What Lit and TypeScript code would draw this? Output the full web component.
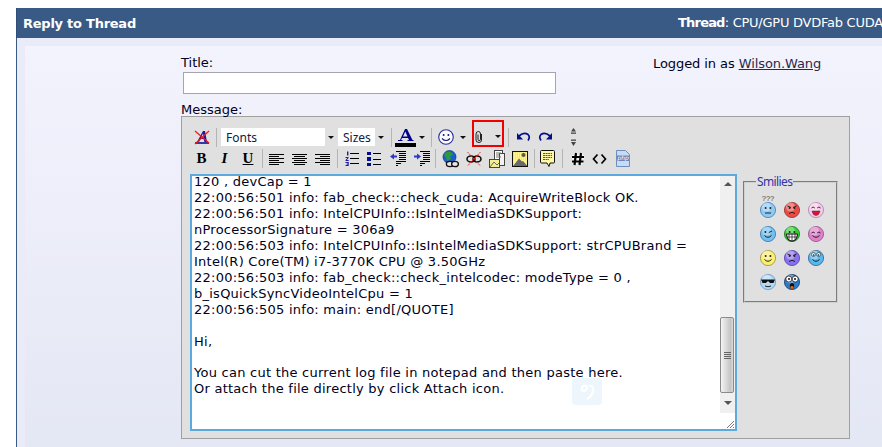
import { LitElement, html, css, svg } from "lit";
import { customElement } from "lit/decorators.js";

const ic = (w: number, h: number, body: unknown) =>
  html`<svg class="ic" width=${w} height=${h} viewBox="0 0 ${w} ${h}">${body}</svg>`;

const arrow = html`<i class="arrow"></i>`;

const lines = (coords: number[][], color = "#000") =>
  coords.map(([x1, y, x2]) => svg`<rect x=${x1} y=${y} width=${x2 - x1} height="1" fill=${color}/>`);

const icons = {
  remove: ic(16, 16, svg`
    <path d="M1 14h14" stroke="#00008b" stroke-width="1.5"/>
    <path d="M3 13 L9 2 h2 L13 13 h-2.5 L9.5 10 H6.5 L5 13z" fill="#1a1aa8"/>
    <path d="M7.2 8.5 L9 4.5 L9.8 8.5z" fill="#e0e0e0"/>
    <path d="M1 2 L15 14 M15 2 L1 15" stroke="#f01818" stroke-width="1.2"/>`),
  color: ic(21, 20, svg`
    <path d="M3 14 h4.5 v-1 h-1.5 l1-2 h6 l1 2 h-1.5 v1 h6 v-1 h-1 L12 2 H10 L5 13 H3z M8 9.5 L10.3 4.5 L12.5 9.5z" fill="#00008b" fill-rule="evenodd"/>
    <rect x="0" y="16" width="21" height="4" fill="#000"/>`),
  smile: ic(16, 16, svg`
    <circle cx="8" cy="8" r="7.3" fill="#fafaff" stroke="#2a2aa0" stroke-width="1.1"/>
    <circle cx="5.6" cy="6" r="1" fill="#1a1a70"/><circle cx="10.4" cy="6" r="1" fill="#1a1a70"/>
    <path d="M4 9.5 Q8 13.5 12 9.5" fill="none" stroke="#1a1a70" stroke-width="1.1"/>`),
  clip: ic(8, 12, svg`
    <path d="M6.5 3 V9 Q6.5 11.5 4 11.5 Q1 11.5 1 9 V3 Q1 .5 3.5 .5 Q5.5 .5 5.5 3 V8.5 Q5.5 9.5 4 9.5 Q3 9.5 3 8.5 V3.5" fill="none" stroke="#222" stroke-width="1"/>`),
  undo: ic(15, 12, svg`
    <path d="M3 5 Q8 0.5 12 3.5 Q14.5 6 12 9.5" fill="none" stroke="#00108c" stroke-width="1.7"/>
    <path d="M1 2 L1 8.5 L7 8.5z" fill="#00108c"/>`),
  redo: ic(15, 12, svg`
    <path d="M12 5 Q7 0.5 3 3.5 Q0.5 6 3 9.5" fill="none" stroke="#00108c" stroke-width="1.7"/>
    <path d="M14 2 L14 8.5 L8 8.5z" fill="#00108c"/>`),
  resize: ic(7, 20, svg`
    <path d="M3.5 1 L6 4.5 H1z" fill="#444"/><rect x="1" y="5.5" width="5" height="1.3" fill="#444"/>
    <rect x="1" y="12.5" width="5" height="1.3" fill="#444"/><path d="M3.5 19 L6 15 H1z" fill="#444"/>`),
  left: ic(15, 12, lines([[0, 1, 15], [0, 3, 10], [0, 5, 15], [0, 7, 10], [0, 9, 15], [0, 11, 10]])),
  center: ic(15, 12, lines([[0, 1, 15], [2, 3, 13], [0, 5, 15], [2, 7, 13], [0, 9, 15], [2, 11, 13]])),
  right: ic(15, 12, lines([[0, 1, 15], [5, 3, 15], [0, 5, 15], [5, 7, 15], [0, 9, 15], [5, 11, 15]])),
  ol: ic(14, 15, svg`
    <path d="M2 0.5h1.4v4H2z M0.5 6h3v1l-1.6 2h1.8v1H0.5v-.8l1.8-2.2H.5z M.5 11h3.2v4H.5v-1h2v-.5h-1v-.8h1V12H.5z" fill="#1a1ab0"/>
    ${lines([[5, 2, 14], [5, 7, 14], [5, 12, 14]])}`),
  ul: ic(14, 14, svg`
    <rect x="0" y="0" width="4" height="3" fill="#00108c"/><rect x="0" y="5" width="4" height="4" fill="#00108c"/><rect x="0" y="11" width="4" height="3" fill="#00108c"/>
    ${lines([[6, 1, 14], [6, 7, 14], [6, 12, 14]])}`),
  outdent: ic(16, 15, svg`
    <path d="M0 5.5 L4 2.5 V4.5 H7 V6.5 H4 V8.5z" fill="#2a3ac8"/>
    ${lines([[6, 0, 16], [9, 2, 16], [9, 4, 16], [9, 6, 16], [9, 8, 16], [6, 10, 16], [6, 12, 11], [6, 14, 8]])}`),
  indent: ic(16, 15, svg`
    <path d="M7 5.5 L3 2.5 V4.5 H0 V6.5 H3 V8.5z" fill="#2a3ac8"/>
    ${lines([[6, 0, 16], [9, 2, 16], [9, 4, 16], [9, 6, 16], [9, 8, 16], [6, 10, 16], [6, 12, 11], [6, 14, 8]])}`),
  globe: ic(17, 18, svg`
    <circle cx="7.5" cy="7" r="6.5" fill="#1a5fd0" stroke="#102a80" stroke-width=".7"/>
    <path d="M3 3 Q6 0.5 9 2 L11 5 L8 6 L9 9 L5 11 L4 7 L2 6z" fill="#2c9a3c"/>
    <ellipse cx="8" cy="14" rx="3.6" ry="2.6" fill="#e6e6e6" stroke="#111" stroke-width="1.3"/>
    <ellipse cx="13" cy="14" rx="3.4" ry="2.6" fill="#e6e6e6" stroke="#111" stroke-width="1.3"/>`),
  unlink: ic(16, 16, svg`
    <ellipse cx="5" cy="8" rx="4" ry="3" fill="none" stroke="#111" stroke-width="1.6"/>
    <ellipse cx="11" cy="8" rx="4" ry="3" fill="none" stroke="#111" stroke-width="1.6"/>
    <path d="M1.5 1 L14.5 15 M14.5 1 L1.5 15" stroke="#f02020" stroke-width=".9" stroke-dasharray="2 .7"/>`),
  doc: ic(16, 18, svg`
    <rect x="5.5" y=".5" width="8" height="13" fill="#fff" stroke="#444"/>
    <rect x="10.5" y="3.5" width="5" height="12" fill="#f2f2f2" stroke="#444"/>
    <path d="M7 3h5M7 5h3M7 7h5" stroke="#777"/>
    <rect x=".5" y="9.5" width="10" height="8" fill="#f4ee90" stroke="#444"/>
    <path d="M1 17 L5 12 L8 15 L10 13" stroke="#666" fill="none"/>`),
  image: ic(16, 16, svg`
    <rect x=".5" y=".5" width="15" height="15" fill="#fff38a" stroke="#111"/>
    <path d="M1 2h14M1 4h14M1 6h14M1 8h14" stroke="#f8e000" stroke-dasharray="1 1"/>
    <circle cx="11.5" cy="4" r="2" fill="#5a5a3a"/>
    <path d="M1 15 L7 7.5 L10 10.5 L11 10 L15 14.5 V15z" fill="#6a6a6a"/>`),
  quote: ic(15, 17, svg`
    <path d="M1.5 .5 H13.5 Q14.5 .5 14.5 1.5 V12 Q14.5 13 13.5 13 H10 L9 16.5 L7 13 H1.5 Q.5 13 .5 12 V1.5 Q.5 .5 1.5 .5z" fill="#fff7a8" stroke="#111"/>
    <path d="M3 3.5h9M3 5.5h9M3 7.5h9M3 9.5h6" stroke="#555" stroke-dasharray="2 .6"/>`),
  hash: ic(14, 14, svg`
    <path d="M5 1 L3.5 13 M10 1 L8.5 13 M1 5 H13 M1 9.5 H12.5" stroke="#fff" stroke-width="4" opacity=".7"/>
    <path d="M5 1 L3.5 13 M10 1 L8.5 13 M1 5 H13 M1 9.5 H12.5" stroke="#000" stroke-width="2.2"/>`),
  code: ic(15, 12, svg`<path d="M5.5 1.5 L1.5 6 L5.5 10.5 M9.5 1.5 L13.5 6 L9.5 10.5" fill="none" stroke="#000" stroke-width="1.7"/>`),
  php: ic(14, 17, svg`
    <path d="M.5 .5 H9.5 L13.5 4.5 V16.5 H.5z" fill="#c6dcf6" stroke="#6d8fc0"/>
    <path d="M1 5.5 H13 V11 H1z" fill="#6f86b5"/>
    <text x="1.5" y="10" font-size="6" font-family="DejaVu Sans" font-style="italic" fill="#fff">php</text>`),
};

function face(c1: string, c2: string, body: unknown) {
  return svg`
    <circle cx="8" cy="8" r="7.6" fill=${c1} stroke=${c2} stroke-width=".8"/>
    <circle cx="6.5" cy="5" r="4.5" fill="#fff" opacity=".35"/>
    ${body}`;
}
const eyes = svg`<circle cx="5.6" cy="6" r="1" fill="#222"/><circle cx="10.4" cy="6" r="1" fill="#222"/>`;
const smileM = svg`<path d="M4.5 9.5 Q8 13 11.5 9.5" fill="none" stroke="#222"/>`;
const frown = svg`<path d="M5 11.5 Q8 9 11 11.5" fill="none" stroke="#222"/>`;
const brows = svg`<path d="M3.5 4 L7 5.5 M12.5 4 L9 5.5" stroke="#222"/>`;
const smilies = [
  html`<svg width="16" height="24" viewBox="0 -8 16 24">
    <text x="8" y="-1" text-anchor="middle" font-size="7.5" font-family="Liberation Sans" fill="#444">???</text>
    ${face("#8ccaf4", "#4a7ab0", svg`${eyes}<path d="M5 11 H11" stroke="#222"/>`)}</svg>`,
  html`<svg width="16" height="16">${face("#ee4a44", "#903030", svg`${brows}${eyes}${frown}`)}</svg>`,
  html`<svg width="16" height="16">${face("#f8c8e8", "#b080b0", svg`<path d="M3.5 6 Q5 4 6.8 6 M9.2 6 Q11 4 12.5 6" fill="none" stroke="#333"/><path d="M4 9 H12 Q11 13.5 8 13.5 Q5 13.5 4 9z" fill="#e81030" stroke="#333" stroke-width=".5"/>`)}</svg>`,
  html`<svg width="16" height="16">${face("#72c0f0", "#3a72aa", svg`<circle cx="5.4" cy="6" r="1" fill="#222"/><path d="M8.8 6.5 L12 5" stroke="#222"/>${smileM}`)}</svg>`,
  html`<svg width="16" height="16">${face("#30d030", "#207020", svg`${eyes}<path d="M2.5 8 H13.5 Q13 15 8 15 Q3 15 2.5 8z" fill="#fff" stroke="#111"/><path d="M5 8v6.5M8 8v7M11 8v6.5M3 11H13" stroke="#111" stroke-width=".7"/>`)}</svg>`,
  html`<svg width="16" height="16">${face("#e080c8", "#905088", svg`<path d="M3.5 7 Q5 5 6.8 7 M9.2 7 Q11 5 12.5 7" fill="none" stroke="#222"/>${smileM}`)}</svg>`,
  html`<svg width="16" height="16">${face("#f8ee70", "#a09040", svg`${eyes}${smileM}`)}</svg>`,
  html`<svg width="16" height="16">${face("#8870f0", "#5040a0", svg`${brows}${eyes}${frown}`)}</svg>`,
  html`<svg width="16" height="16">${face("#58b8ee", "#305e90", svg`<circle cx="5.4" cy="4.5" r="2" fill="#dff" stroke="#222" stroke-width=".6"/><circle cx="10.6" cy="4.5" r="2" fill="#dff" stroke="#222" stroke-width=".6"/><circle cx="5.6" cy="5" r=".8" fill="#111"/><circle cx="10.4" cy="5" r=".8" fill="#111"/>${smileM}`)}</svg>`,
  html`<svg width="16" height="16">${face("#b0daf8", "#7090c0", svg`<path d="M1 5.5 H15 L13.5 9 H10 L8 7 L6 9 H2.5z" fill="#111"/><path d="M5 12 Q8 13.5 11 12" fill="none" stroke="#222"/>`)}</svg>`,
  html`<svg width="16" height="16">${face("#2a7cc8", "#153a70", svg`<circle cx="4.8" cy="5" r="3" fill="#fff" stroke="#111" stroke-width=".7"/><circle cx="11.2" cy="5" r="3" fill="#fff" stroke="#111" stroke-width=".7"/><circle cx="5" cy="5" r="1" fill="#111"/><circle cx="11" cy="5" r="1" fill="#111"/><ellipse cx="8" cy="12" rx="2.2" ry="3" fill="#111"/><ellipse cx="8" cy="13.5" rx="1.6" ry="1.4" fill="#f06010"/>`)}</svg>`,
];

type Item = [number, unknown];
const sep = "sep";
const row1: Item[] = [
  [23, icons.remove], [7, sep], [1, null],
  [116, html`<div class="select"><span>Fonts</span><b>${arrow}</b></div>`], [1, null],
  [49, html`<div class="select"><span>Sizes</span><b>${arrow}</b></div>`], [8, sep],
  [21, icons.color], [12, arrow], [6, sep],
  [24, icons.smile], [10, arrow], [4, null],
  [32, html`<div class="attach">${icons.clip}${arrow}</div>`], [8, sep],
  [22, icons.undo], [22, icons.redo], [7, null], [20, icons.resize],
];
const row2: Item[] = [
  [23, html`<span class="fmt b">B</span>`], [23, html`<span class="fmt i">I</span>`], [24, html`<span class="fmt u">U</span>`], [5, sep],
  [23, icons.left], [23, icons.center], [23, icons.right], [7, sep],
  [21, icons.ol], [24, icons.ul], [24, icons.outdent], [23, icons.indent], [5, sep],
  [24, icons.globe], [23, icons.unlink], [23, icons.doc], [23, icons.image], [6, sep],
  [20, icons.quote], [10, sep], [21, icons.hash], [23, icons.code], [23, icons.php],
];

const renderRow = (items: Item[], cls: string) => html`<div class="row ${cls}">
  ${items.map(([w, c]) => html`<div class="cell" style="width:${w}px">${c === sep ? html`<i class="line"></i>` : c}</div>`)}
</div>`;

const message = [
  "120 , devCap = 1",
  "22:00:56:501 info: fab_check::check_cuda: AcquireWriteBlock OK.",
  "22:00:56:501 info: IntelCPUInfo::IsIntelMediaSDKSupport:",
  "nProcessorSignature = 306a9",
  "22:00:56:503 info: IntelCPUInfo::IsIntelMediaSDKSupport: strCPUBrand =",
  "Intel(R) Core(TM) i7-3770K CPU @ 3.50GHz",
  "22:00:56:503 info: fab_check::check_intelcodec: modeType = 0 ,",
  "b_isQuickSyncVideoIntelCpu = 1",
  "22:00:56:505 info: main: end[/QUOTE]",
  "",
  "Hi,",
  "",
  "You can cut the current log file in notepad and then paste here.",
  "Or attach the file directly by click Attach icon.",
];

@customElement("app-root")
export class AppRoot extends LitElement {
  static styles = css`
    :host {
      display: block; width: 882px; height: 447px; overflow: hidden; background: #fff;
      font-family: "DejaVu Sans", Verdana, sans-serif; font-size: 13px; color: #000022;
      box-sizing: border-box; padding: 8px 0 0 16px; position: relative;
    }
    * { box-sizing: border-box; }
    .head {
      height: 30px; background: #395a85; color: #fff; display: flex; justify-content: space-between;
      align-items: center; padding-left: 6px; white-space: nowrap; border-left: 1px solid #2f4d78;
    }
    .head .t { font-weight: bold; font-size: 13px; letter-spacing: -0.25px; margin-top: 1px; }
    .head .r { width: 204px; font-size: 13px; letter-spacing: -0.25px; margin-top: -1px; }
    .head .r b { letter-spacing: -0.8px; }
    .panel {
      height: 409px; background: #e9ebf8; border-left: 1px solid #395a85; padding: 7px 0 0 7px;
    }
    .inner {
      height: 402px; background: linear-gradient(#f3f3fd, #e4e7f4); border-top: 1px solid #ecebf5; border-left: 1px solid #ecebf5;
      padding: 9px 0 0 156px;
    }
    .top { display: flex; width: 669px; height: 47px; }
    .titlecol { width: 472px; }
    .label { line-height: 16px; height: 16px; }
    .titlebox { display: block; margin: 1px 0 0 2px; width: 373px; height: 22px; border: 1px solid #a5a5ad; background: #fff; }
    .logged { line-height: 16px; padding-top: 1px; letter-spacing: -0.08px; }
    .logged a { color: #2a2a4a; text-decoration: underline; }
    .msg { height: 14px; line-height: 15px; }
    .editor {
      width: 669px; height: 323px; background: #e0e0e0; border: 1px solid #a0a0a0;
      padding: 3px 0 0 8px;
    }
    .row { display: flex; align-items: center; }
    .r1 { height: 27px; }
    .r2 { height: 23px; }
    .cell { display: flex; align-items: center; justify-content: center; height: 100%; flex: none; }
    .r1 .cell { padding-top: 7px; }
    .ic { display: block; flex: none; }
    .line { display: block; width: 1px; height: 19px; background: #b4b4b4; }
    .arrow { display: block; width: 0; height: 0; border: 3px solid transparent; border-top-color: #111; border-bottom: 0; }
    .select {
      width: 100%; height: 18px; background: #fff; display: flex; justify-content: space-between; align-items: center;
      font-family: "Noto Sans", sans-serif; font-size: 12px; padding-left: 5px; color: #102040;
    }
    .select b { width: 12px; height: 18px; background: #e0e0e0; display: flex; align-items: center; justify-content: center; }
    .attach {
      width: 32px; height: 27px; margin-top: -7px; border: 2px solid #f00000; display: flex; align-items: center; justify-content: space-between;
      padding: 6px 1px 0 1px; flex: none;
    }
    .fmt { font-family: "Liberation Serif", serif; font-size: 15px; font-weight: bold; color: #000; line-height: 15px; }
    .fmt.i { font-style: italic; }
    .fmt.u { text-decoration: underline; }
    .body { display: flex; margin-top: 4px; }
    .area {
      width: 547px; height: 257px; background: #fff; border: 2px solid #5aaae0; display: flex;
    }
    .text {
      flex: 1; margin-top: -2px; padding-left: 2px; line-height: 15.95px; font-size: 13px; letter-spacing: 0.25px;
      white-space: pre; overflow: hidden; color: #000022;
    }
    .bar { width: 15px; display: flex; flex-direction: column; background: #f0f0f0; flex: none; }
    .arr { height: 16px; display: flex; align-items: center; justify-content: center; flex: none; }
    .arr i { display: block; border: 4px solid transparent; border-bottom: 4px solid #555; border-top: 0; }
    .arr.d { height: 19px; }
    .arr.d i { border-bottom: 0; border-top: 4px solid #555; }
    .track { flex: 1; display: flex; flex-direction: column; justify-content: flex-end; }
    .thumb {
      height: 76px; margin-right: 1px; border: 1px solid #8a8a8a; border-radius: 2px;
      background: linear-gradient(90deg, #f4f4f4, #c4c4c4 80%, #dcdcdc); display: flex; align-items: center; justify-content: center; flex-direction: column; gap: 1px;
    }
    .thumb u { display: block; width: 7px; height: 1px; background: #666; }
    .grip { height: 17px; background: #fff; border-top: 1px solid #f0f0f0; position: relative; flex: none; }
    .grip svg { position: absolute; right: 0; bottom: 0; }
    fieldset {
      margin: 0 0 0 6px; width: 95px; height: 129px; padding: 0 0 0 11px; border: 2px groove #d0d0d0; min-width: 0;
    }
    legend { font-family: "Noto Sans", sans-serif; font-size: 12px; color: #3333a8; padding: 0 1px; letter-spacing: -0.6px; line-height: 15px; }
    .grid { display: grid; grid-template-columns: repeat(3, 24px); grid-auto-rows: 24px; margin-top: 5px; }
    .grid div { display: flex; justify-content: center; align-items: flex-end; height: 24px; }
    .grid svg { display: block; }
    .wm {
      position: absolute; left: 572px; top: 378px; width: 30px; height: 27px; background: #eef6fd; border-radius: 4px;
      display: flex; align-items: center; justify-content: center;
    }
  `;

  render() {
    return html`
      <div class="head">
        <span class="t">Reply to Thread</span>
        <span class="r"><b>Thread</b>: CPU/GPU DVDFab CUDA</span>
      </div>
      <div class="panel">
        <div class="inner">
          <div class="top">
            <div class="titlecol">
              <div class="label">Title:</div>
              <div class="titlebox"></div>
            </div>
            <div class="logged">Logged in as <a>Wilson.Wang</a></div>
          </div>
          <div class="msg">Message:</div>
          <div class="editor">
            ${renderRow(row1, "r1")}
            ${renderRow(row2, "r2")}
            <div class="body">
              <div class="area">
                <div class="text">${message.join("\n")}</div>
                <div class="bar">
                  <div class="arr"><i></i></div>
                  <div class="track"><div class="thumb"><u></u><u></u><u></u><u></u></div></div>
                  <div class="arr d"><i></i></div>
                  <div class="grip"><svg width="9" height="9"><path d="M1 8 L8 1 M4 8 L8 4 M7 8 L8 7" stroke="#777" fill="none"/></svg></div>
                </div>
              </div>
              <fieldset>
                <legend>Smilies</legend>
                <div class="grid">${smilies.map((s) => html`<div>${s}</div>`)}</div>
              </fieldset>
            </div>
          </div>
        </div>
      </div>
      <div class="wm"><svg width="18" height="18" viewBox="0 0 18 18"><path d="M4 4 Q7 1 9 4 Q9 8 5 8 Q3 7 4 4z M11 3 Q15 2 15 6 Q15 13 9 16" fill="none" stroke="#fff" stroke-width="2.2"/></svg></div>
    `;
  }
}
